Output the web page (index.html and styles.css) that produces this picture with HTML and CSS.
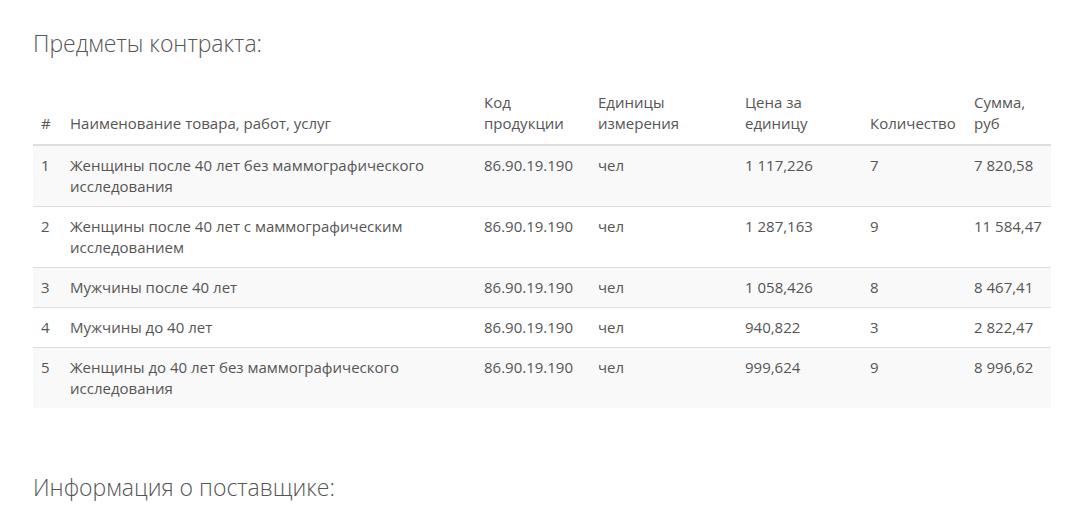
FILE: index.html
```html
<!DOCTYPE html>
<html lang="ru">
<head>
<meta charset="utf-8">
<title>Предметы контракта</title>
<link rel="stylesheet" href="styles.css">
</head>
<body>
<main class="page">
  <h2 class="section-title">Предметы контракта:</h2>
  <table class="items">
    <colgroup>
      <col class="c-num"><col class="c-name"><col class="c-code"><col class="c-unit"><col class="c-price"><col class="c-qty"><col class="c-sum">
    </colgroup>
    <thead>
      <tr>
        <th>#</th>
        <th>Наименование товара, работ, услуг</th>
        <th>Код<br>продукции</th>
        <th>Единицы<br>измерения</th>
        <th>Цена за<br>единицу</th>
        <th>Количество</th>
        <th>Сумма,<br>руб</th>
      </tr>
    </thead>
    <tbody>
      <tr>
        <td>1</td><td>Женщины после 40 лет без маммографического исследования</td><td>86.90.19.190</td><td>чел</td><td>1 117,226</td><td>7</td><td>7 820,58</td>
      </tr>
      <tr>
        <td>2</td><td>Женщины после 40 лет с маммографическим исследованием</td><td>86.90.19.190</td><td>чел</td><td>1 287,163</td><td>9</td><td>11 584,47</td>
      </tr>
      <tr>
        <td>3</td><td>Мужчины после 40 лет</td><td>86.90.19.190</td><td>чел</td><td>1 058,426</td><td>8</td><td>8 467,41</td>
      </tr>
      <tr>
        <td>4</td><td>Мужчины до 40 лет</td><td>86.90.19.190</td><td>чел</td><td>940,822</td><td>3</td><td>2 822,47</td>
      </tr>
      <tr>
        <td>5</td><td>Женщины до 40 лет без маммографического исследования</td><td>86.90.19.190</td><td>чел</td><td>999,624</td><td>9</td><td>8 996,62</td>
      </tr>
    </tbody>
  </table>
  <h2 class="section-title section-title--next">Информация о поставщике:</h2>
</main>
</body>
</html>
```

FILE: styles.css
```css
html, body {
  margin: 0;
  padding: 0;
  background: #fff;
}
body {
  font-family: "Open Sans", "Liberation Sans", sans-serif;
  color: #555;
  font-size: 15px;
  line-height: 21px;
}
.page {
  width: 1018px;
  padding: 29px 0 0 33px;
}
.section-title {
  margin: 0;
  font-size: 23px;
  font-weight: 300;
  line-height: 28px;
  color: #555;
}
.section-title--next {
  margin-top: 65px;
}
.items {
  width: 1018px;
  table-layout: fixed;
  border-collapse: collapse;
  border-spacing: 0;
  margin-top: 27px;
}
.c-num { width: 29px; }
.c-name { width: 414px; }
.c-code { width: 114px; }
.c-unit { width: 147px; }
.c-price { width: 125px; }
.c-qty { width: 104px; }
.c-sum { width: 85px; }
.items th {
  font-weight: 400;
  text-align: left;
  vertical-align: bottom;
  padding: 8px 8px 10px;
  border-bottom: 2px solid #ddd;
}
.items td {
  vertical-align: top;
  padding: 9px 8px;
  border-top: 1px solid #ddd;
}
.items tbody tr:first-child td {
  border-top: 0;
}
.items tbody tr:nth-child(odd) {
  background: #f9f9f9;
}
```
